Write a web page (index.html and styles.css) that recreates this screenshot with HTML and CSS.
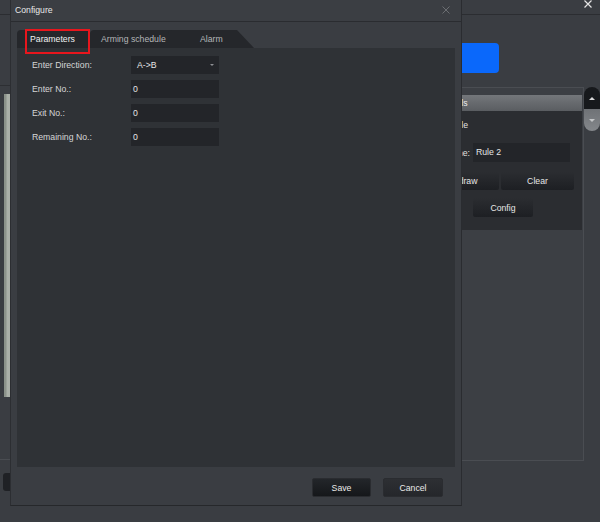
FILE: index.html
```html
<!DOCTYPE html>
<html>
<head>
<meta charset="utf-8">
<title>Configure</title>
<link rel="stylesheet" href="styles.css">
</head>
<body>
<div class="app">
  <div class="topbar">
    <svg class="app-close" width="8" height="8" viewBox="0 0 8 8"><path d="M0.5 0.5L7.5 7.5M7.5 0.5L0.5 7.5" stroke="#e4e4e4" stroke-width="1.2"/></svg>
  </div>
  <div class="main">
    <div class="left">
      <div class="toolbar"></div>
      <div class="video"></div>
      <div class="bottom-line"></div>
      <div class="left-btn"></div>
    </div>
    <div class="right">
      <div class="blue-btn"></div>
      <div class="panel-wrap">
        <div class="panel">
          <div class="panel-head">Details</div>
          <div class="panel-body">
            <div class="p-row p-enable">Enable</div>
            <div class="p-row p-name">
              <span class="p-label">Rule Name:</span>
              <span class="p-input">Rule 2</span>
            </div>
            <div class="p-btns">
              <span class="p-btn p-btn-wide">Redraw</span>
              <span class="p-btn p-btn-wide">Clear</span>
            </div>
            <div class="p-config">
              <span class="p-btn p-btn-config">Config</span>
            </div>
          </div>
        </div>
        <div class="scrollbar">
          <div class="sb-up"><span class="tri-up"></span></div>
          <div class="sb-down"><span class="tri-down"></span></div>
        </div>
      </div>
    </div>
  </div>
</div>

<div class="dialog">
  <div class="dlg-title">
    <span class="dlg-title-text">Configure</span>
    <svg class="dlg-close" width="8" height="8" viewBox="0 0 8 8"><path d="M0.5 0.5L7.5 7.5M7.5 0.5L0.5 7.5" stroke="#6b6e72" stroke-width="1"/></svg>
  </div>
  <div class="dlg-body">
    <div class="tabs">
      <div class="tab tab-1 active">Parameters</div>
      <div class="tab tab-2">Arming schedule</div>
      <div class="tab tab-3">Alarm</div>
    </div>
    <div class="content">
      <div class="row">
        <span class="label">Enter Direction:</span>
        <span class="field select">A-&gt;B<span class="caret"></span></span>
      </div>
      <div class="row">
        <span class="label">Enter No.:</span>
        <span class="field">0</span>
      </div>
      <div class="row">
        <span class="label">Exit No.:</span>
        <span class="field">0</span>
      </div>
      <div class="row">
        <span class="label">Remaining No.:</span>
        <span class="field">0</span>
      </div>
    </div>
  </div>
  <div class="dlg-footer">
    <span class="btn btn-save">Save</span>
    <span class="btn btn-cancel">Cancel</span>
  </div>
  <div class="highlight"></div>
</div>
</body>
</html>
```

FILE: styles.css
```css
* { box-sizing: border-box; }

html, body {
  margin: 0;
  padding: 0;
}

body {
  width: 600px;
  height: 522px;
  overflow: hidden;
  position: relative;
  background: #3a3d42;
  font-family: "Liberation Sans", Arial, sans-serif;
  font-size: 8.7px;
  color: #d4d4d4;
}

/* ---------- background application ---------- */
.app {
  display: flex;
  flex-direction: column;
  height: 522px;
}

.topbar {
  height: 15px;
  border-bottom: 1px solid #2b2d31;
  display: flex;
  justify-content: flex-end;
  align-items: flex-start;
  padding-right: 8px;
}

.app-close { display: block; }

.main {
  display: flex;
  flex: 1;
}

.left {
  width: 420px;
  display: flex;
  flex-direction: column;
}

.toolbar {
  height: 71px;
  border-bottom: 1px solid #2d2f33;
}

.video {
  margin: 8px 0 0 4px;
  width: 300px;
  height: 303px;
  background: linear-gradient(to right, #8b928a 0, #8b928a 2px, #aab0a8 3px, #b4b9b2 100%);
}

.bottom-line {
  margin-top: 62px;
  border-top: 1px solid #4a4d52;
}

.left-btn {
  margin: 13px 0 0 3px;
  width: 40px;
  height: 18px;
  border-radius: 3px;
  background: #1f2125;
}

.right {
  width: 180px;
  display: flex;
  flex-direction: column;
}

.blue-btn {
  margin-top: 28px;
  width: 79px;
  height: 30px;
  border-radius: 4px;
  background: #0a68fb;
}

.panel-wrap {
  margin-top: 14px;
  display: flex;
}

.panel {
  width: 164px;
  height: 374px;
  border: 1px solid #4a4d52;
  padding-top: 7px;
  background: #3c3f44;
}

.panel-head {
  height: 16px;
  line-height: 16px;
  margin-right: 1px;
  padding-left: 20px;
  color: #eeeeee;
  background: linear-gradient(#74777b, #5a5d61);
}

.panel-body {
  margin-right: 1px;
  height: 119px;
  background: #2b2d31;
  padding-top: 7px;
}

.p-row {
  display: flex;
  align-items: center;
  color: #e2e2e2;
}

.p-enable {
  height: 14px;
  padding-left: 20px;
}

.p-name {
  margin-top: 11px;
  height: 19px;
}

.p-label {
  width: 49px;
  text-align: right;
}

.p-input {
  margin-left: 3px;
  width: 97px;
  height: 19px;
  line-height: 19px;
  padding-left: 3px;
  background: #232529;
  color: #e6e6e6;
}

.p-btns {
  margin-top: 10px;
  display: flex;
  gap: 2px;
  padding-left: 5px;
}

.p-config {
  margin-top: 8px;
  padding-left: 52px;
  display: flex;
}

.p-btn {
  display: flex;
  align-items: center;
  justify-content: center;
  border-radius: 2px;
  color: #e6e6e6;
  background: linear-gradient(#2b2d31, #1d1f23);
}

.p-btn-wide {
  width: 73px;
  height: 18px;
}

.p-btn-config {
  width: 60px;
  height: 19px;
}

.scrollbar {
  width: 16px;
  display: flex;
  flex-direction: column;
}

.sb-up {
  height: 22px;
  border-radius: 8px 8px 0 0;
  background: #17191c;
  display: flex;
  justify-content: center;
  align-items: center;
}

.sb-down {
  height: 22px;
  border-radius: 0 0 8px 8px;
  background: linear-gradient(#6f7276, #84878b);
  display: flex;
  justify-content: center;
  align-items: center;
}

.tri-up {
  width: 0;
  height: 0;
  border-left: 3px solid transparent;
  border-right: 3px solid transparent;
  border-bottom: 3px solid #d8d8d8;
}

.tri-down {
  width: 0;
  height: 0;
  border-left: 3px solid transparent;
  border-right: 3px solid transparent;
  border-top: 3px solid #c4c6c8;
}

/* ---------- dialog ---------- */
.dialog {
  position: absolute;
  left: 10px;
  top: 0;
  width: 452px;
  height: 506px;
  border-left: 1px solid #2c2e32;
  border-right: 1px solid #2a2c30;
  border-bottom: 1px solid #26282b;
  background: #3a3d42;
  display: flex;
  flex-direction: column;
}

.dlg-title {
  height: 22px;
  border-bottom: 1px solid #2a2c30;
  display: flex;
  align-items: center;
  justify-content: space-between;
  padding: 0 11px 2px 4px;
  background: #3b3e43;
}

.dlg-title-text {
  color: #e8e8e8;
}

.dlg-close { display: block; margin-top: 0; }

.dlg-body {
  padding: 8px 6px 0 6px;
  display: flex;
  flex-direction: column;
}

.tabs {
  display: flex;
  height: 18px;
}

.tab {
  position: relative;
  height: 18px;
  line-height: 18px;
  background: #25272b;
  border-top-left-radius: 4px;
  color: #b4b6b8;
  white-space: nowrap;
}

.tab::after {
  content: "";
  position: absolute;
  top: 0;
  left: 100%;
  width: 0;
  height: 0;
  border-bottom: 18px solid #25272b;
  border-right: 17px solid transparent;
}

.tab.active { color: #f2f2f2; }

.tab-1 { width: 70px; padding-left: 13px; }
.tab-2 { width: 85px; margin-left: 3px; padding-left: 11px; }
.tab-3 { width: 69px; margin-left: -7px; padding-left: 32px; }

.content {
  height: 419px;
  background: #2f3236;
  padding: 8px 0 0 15px;
  display: flex;
  flex-direction: column;
  gap: 6px;
}

.row {
  display: flex;
  align-items: center;
  height: 18px;
}

.label {
  width: 99px;
  color: #d6d6d6;
}

.field {
  position: relative;
  width: 88px;
  height: 18px;
  line-height: 18px;
  padding-left: 2px;
  background: #232529;
  color: #e6e6e6;
}

.field.select { padding-left: 6px; }

.caret {
  position: absolute;
  right: 5px;
  top: 8px;
  width: 0;
  height: 0;
  border-left: 2px solid transparent;
  border-right: 2px solid transparent;
  border-top: 2px solid #8e9094;
}

.dlg-footer {
  display: flex;
  justify-content: flex-end;
  gap: 12px;
  padding: 11px 18px 0 0;
}

.btn {
  height: 19px;
  display: flex;
  align-items: center;
  justify-content: center;
  border-radius: 2px;
  color: #eaeaea;
  border: 1px solid #2a2c30;
}

.btn-save {
  width: 59px;
  background: linear-gradient(#23262a, #15171a);
}

.btn-cancel {
  width: 60px;
  background: linear-gradient(#2d2f33, #25272b);
}

.highlight {
  position: absolute;
  left: 14px;
  top: 29px;
  width: 65px;
  height: 25px;
  border: 2px solid #e8161d;
}
```
